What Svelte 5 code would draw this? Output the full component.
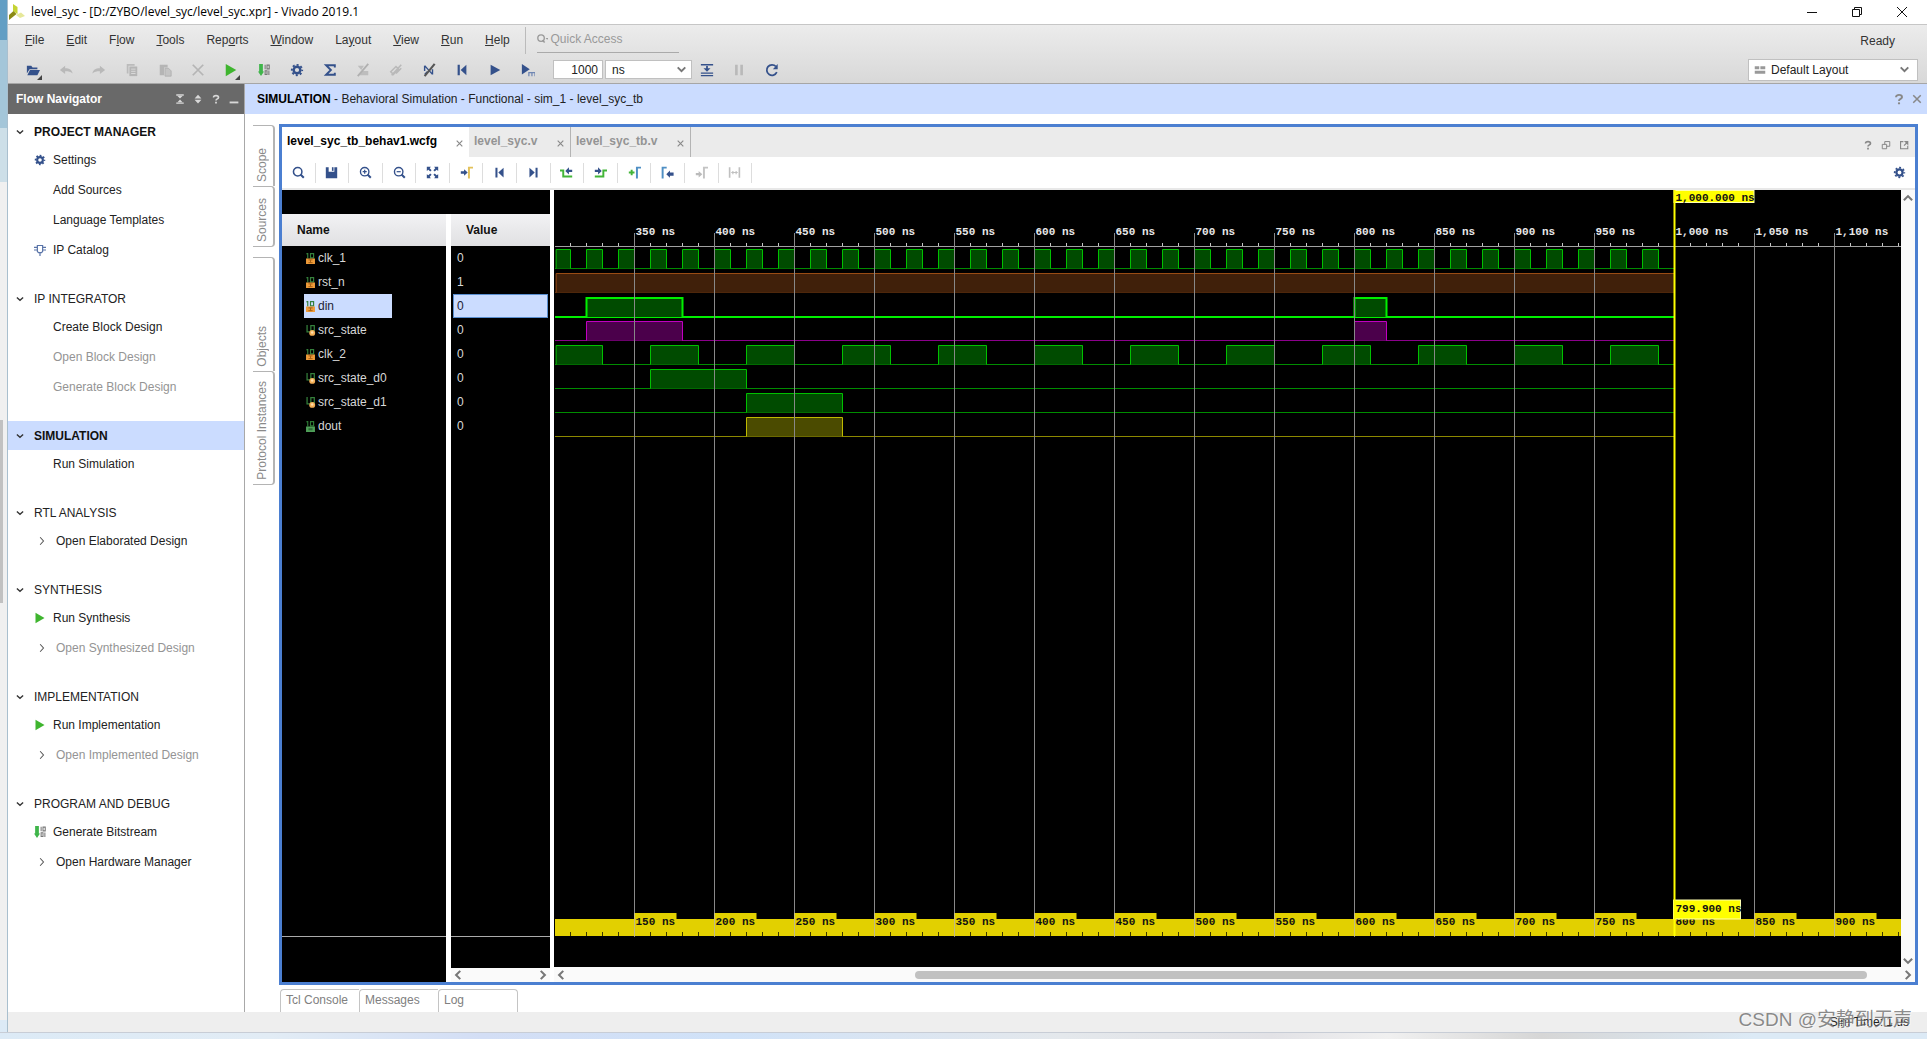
<script>
  const navy = '#34518b';
  const gear = (c) =>
    `<circle cx="8" cy="8" r="3.8" fill="none" stroke="${c}" stroke-width="2.8"/><circle cx="8" cy="8" r="5.9" fill="none" stroke="${c}" stroke-width="2.2" stroke-dasharray="2.32 2.31" stroke-dashoffset="1.16"/>`;
  const bits = `<path d="M1.500 0h5v10h1.500l-4 6-4-6h1.500z" fill="#3fb54a"/><path d="M9.500 1v6M12 1.500h3v5h-3zM9.500 9h2.500v5H9.500zM14.500 8.500v6" fill="none" stroke="#777" stroke-width="1.400"/>`;
  const first = (c) => `<path d="M3 2h2.500v12H3zM13 2v12L6.500 8z" fill="${c}"/>`;

  const icons = {
    open: `<path d="M1 3h5l1.500 2H13v2H4L1 12z" fill="${navy}"/><path d="M4.500 8H16l-3 6H1.500z" fill="${navy}"/>`,
    undo: `<path d="M7 3v3c5 0 8 2 8.500 6C13 10 11 9.500 7 9.500v3L1 8z" fill="#b9b9b9"/>`,
    redo: `<path d="M9 3v3c-5 0-8 2-8.500 6C3 10 5 9.500 9 9.500v3L15 8z" fill="#b9b9b9"/>`,
    copy: `<path d="M2 1h9v2H4v9H2z" fill="#bbb"/><path d="M5 4h9v11H5z" fill="#b5b5b5"/><path d="M7 7h5M7 9.500h5M7 12h5" stroke="#ddd"/>`,
    paste: `<path d="M2 2h9v3H7v9H2z" fill="#b5b5b5"/><path d="M8 6h4l3 3v6H8z" fill="#c4c4c4" stroke="#b0b0b0"/>`,
    cut: `<path d="M2 2l12 12M14 2L2 14" stroke="#b5b5b5" stroke-width="2"/>`,
    run: `<path d="M2 1L14 8 2 15z" fill="#3fb52f"/>`,
    bits,
    gear: gear(navy),
    sigma: `<path d="M13.500 5V2.500H3.500L9 8l-5.500 5.500h10V11" fill="none" stroke="${navy}" stroke-width="2.200"/>`,
    off1: `<path d="M2 3h7L6 8zM7 9h7v5H4z" fill="#bdbdbd"/><path d="M14 1L2 15" stroke="#b0b0b0" stroke-width="2"/>`,
    off2: `<path d="M2 10l6-6 3 3-6 6zM14 2L3 14M8 12l6-6" fill="none" stroke="#b9b9b9" stroke-width="1.800"/>`,
    nobreak: `<path d="M3 3l9 10M3 3v6M12 13V7M3 13l3-3" fill="none" stroke="${navy}" stroke-width="1.600"/><path d="M14.500 1L3 15" stroke="#555" stroke-width="2.400"/>`,
    first: first(navy),
    play: `<path d="M3 2l11 6-11 6z" fill="${navy}"/>`,
    playm: `<path d="M1 1l9 6-9 6z" fill="${navy}"/><path d="M9 15v-4h7v4M12.500 11v4" fill="none" stroke="#6f86b3" stroke-width="1.400"/>`,
    step: `<path d="M1 2h14M1 11.500h14M1 14.500h14" stroke="${navy}" stroke-width="1.500"/><path d="M7 3.500h2V6h3l-4 4-4-4h3z" fill="${navy}"/>`,
    pause: `<path d="M3.500 2h3v12h-3zM9.500 2h3v12h-3z" fill="#b9b9b9"/>`,
    restart: `<path d="M13.500 10.500A6 6 0 1 1 12.500 4" fill="none" stroke="${navy}" stroke-width="2"/><path d="M14.500 1v6H9z" fill="${navy}"/>`,
    search: `<circle cx="7" cy="7" r="5.200" fill="none" stroke="${navy}" stroke-width="1.900"/><path d="M10.500 10.500l4 4" stroke="${navy}" stroke-width="2.500"/>`,
    save: `<path d="M1 1.500h3.500v5.500h7V1.500H15v13.500H1z" fill="${navy}"/><path d="M8.500 1.500h2v4.500h-2z" fill="${navy}"/>`,
    zoomin: `<circle cx="7" cy="7" r="5.200" fill="none" stroke="${navy}" stroke-width="1.700"/><path d="M10.500 10.500l4 4" stroke="${navy}" stroke-width="2.500"/><path d="M4.500 7h5M7 4.500v5" stroke="${navy}" stroke-width="1.500"/>`,
    zoomout: `<circle cx="7" cy="7" r="5.200" fill="none" stroke="${navy}" stroke-width="1.700"/><path d="M10.500 10.500l4 4" stroke="${navy}" stroke-width="2.500"/><path d="M4.500 7h5" stroke="${navy}" stroke-width="1.500"/>`,
    fit: `<path d="M1 1h5L4.600 2.900l2.300 2.300-1.700 1.700-2.300-2.300L1 6zM15 1h-5l1.400 1.900-2.300 2.300 1.700 1.700 2.300-2.300L15 6zM1 15h5l-1.400-1.900 2.300-2.300-1.700-1.700-2.300 2.300L1 10zM15 15h-5l1.400-1.900-2.300-2.300 1.700-1.700 2.300 2.300L15 10z" fill="${navy}"/>`,
    cursor: `<path d="M1 6.500h4V4l4.500 4L5 12V9.500H1z" fill="${navy}"/><path d="M11 15.500V2H16" fill="none" stroke="#e3c15a" stroke-width="2.400"/>`,
    last: `<path d="M10.500 2H13v12h-2.500zM3 2v12l6.500-6z" fill="${navy}"/>`,
    prevedge: `<path d="M0 5.500h4v7.500H15" fill="none" stroke="#43b538" stroke-width="2.400"/><path d="M15 4.500h-4V1.500L6.500 6l4.500 4.500V7.500h4z" fill="${navy}"/>`,
    nextedge: `<path d="M1 13h10.500V5.500H16" fill="none" stroke="#43b538" stroke-width="2.400"/><path d="M1 4.500h4V1.500L9.500 6 5 10.500V7.500H1z" fill="${navy}"/>`,
    addmark: `<path d="M1 8h7M4.500 4.500v7" stroke="#43b538" stroke-width="2.400"/><path d="M11 15.500V2H16" fill="none" stroke="#4f8fc4" stroke-width="2.400"/>`,
    prevmark: `<path d="M2 15.500V2H7" fill="none" stroke="#4f8fc4" stroke-width="2.400"/><path d="M15.500 8H11V5.500L6.500 10l4.500 4.500V12h4.500z" fill="${navy}"/>`,
    nextmark: `<path d="M1 8.500h3.500V6L9 10l-4.500 4v-2.500H1z" fill="#bbb"/><path d="M11 15.500V2H16" fill="none" stroke="#c4c4c4" stroke-width="2.400"/>`,
    span: `<path d="M2 1.500v13M14 1.500v13" stroke="#c0c0c0" stroke-width="2"/><path d="M4 8h8M6 6v4M10 6v4" stroke="#c0c0c0" stroke-width="1.400"/>`,
    chip: `<path d="M4.500 2h7v8l-1.500 1.500H6L4.500 10zM0 4.500h4.500M0 8h4.500M11.500 4.500H16M11.500 8H16M8 11.500V16" fill="none" stroke="#5a74a8" stroke-width="1.600"/>`,
    down: `<path d="M3 5.500l5 4.500 5-4.500" fill="none" stroke="currentColor" stroke-width="2.200"/>`,
    up: `<path d="M2.500 11L8 5.500l5.500 5.500" fill="none" stroke="currentColor" stroke-width="2.800"/>`,
    dn: `<path d="M2.500 5L8 10.500 13.500 5" fill="none" stroke="currentColor" stroke-width="2.800"/>`,
    left: `<path d="M11 2.500L5.500 8l5.500 5.500" fill="none" stroke="currentColor" stroke-width="2.800"/>`,
    right: `<path d="M5 2.500L10.500 8 5 13.500" fill="none" stroke="currentColor" stroke-width="2.800"/>`,
    thin: `<path d="M5.500 3L10 8l-4.500 5" fill="none" stroke="#555" stroke-width="1.400"/>`,
    close: `<path d="M3 3l10 10M13 3L3 13" stroke="currentColor" stroke-width="2"/>`,
    help: `<path d="M4 5.500C4 1.500 12 1.500 12 5.500 12 8 8 7.500 8 10.500" fill="none" stroke="currentColor" stroke-width="2.600"/><path d="M6.600 12.500h2.800v2.500H6.600z" fill="currentColor"/>`,
    collapse: `<path d="M2 1.500h12M2 14.500h12" stroke="currentColor" stroke-width="2.200"/><path d="M4 3h8L8 7.300zM4 13h8L8 8.700z" fill="currentColor"/>`,
    expand: `<path d="M2.500 7h11L8 1zM2.500 9h11L8 15z" fill="currentColor"/>`,
    minus: `<path d="M1 13.500h14" stroke="currentColor" stroke-width="3"/>`,
    restore: `<path d="M2 7h7v7H2zM6 7V2.500h8v7.500H9" fill="none" stroke="currentColor" stroke-width="1.600"/>`,
    popout: `<path d="M7 2.500H2.500V14H14V9M10 2.500h4v4zM8 9l5-5" fill="none" stroke="currentColor" stroke-width="1.800"/>`,
    layout: `<path d="M1 3h6v4H1zM8.500 3H15v4H8.500zM1 9h14v4H1z" fill="#999"/>`,
    in: `<path d="M4 0v8M2 1.500l2-1M8 1h4.500v6H8z" fill="none" stroke="#35803c" stroke-width="1.700"/><path d="M1.500 8h13v8h-13z" fill="#ee9b3a"/><path d="M5 10h6M5 14h6M8 10v4" stroke="#a05a10" stroke-width="1.300"/>`,
    reg: `<path d="M3 0v10h4M8.500 1h5v7h-5z" fill="none" stroke="#35803c" stroke-width="1.800"/><circle cx="10.500" cy="11.500" r="4.300" fill="#f3ae55"/><circle cx="10.500" cy="11" r="1.800" fill="#ffe0b0"/>`,
    out: `<path d="M4 0v8M2 1.500l2-1M8 1h4.500v6H8z" fill="none" stroke="#2d7a35" stroke-width="1.700"/><path d="M1.500 8h13v8h-13z" fill="#4f9f58"/><path d="M5 10.500h6v3H5z" fill="#2d6b35"/>`
  };

  const menu = [['', 'F', 'ile'], ['', 'E', 'dit'], ['F', 'l', 'ow'], ['', 'T', 'ools'], ['Rep', 'o', 'rts'], ['', 'W', 'indow'], ['La', 'y', 'out'], ['', 'V', 'iew'], ['', 'R', 'un'], ['', 'H', 'elp']];
  const tools = [['open', 'Open', 1], ['undo', 'Undo'], ['redo', 'Redo'], ['copy', 'Copy'], ['paste', 'Paste'], ['cut', 'Delete'], ['run', 'Run', 1], ['bits', 'Generate Bitstream'], ['gear', 'Settings'], ['sigma', 'Report'], ['off1', 'Breakpoint'], ['off2', 'Clear'], ['nobreak', 'Disable'], ['first', 'Restart'], ['play', 'Run All'], ['playm', 'Run For']];
  const waveTools = ['search', 'save', 'zoomin', 'zoomout', 'fit', 'cursor', 'first', 'last', 'prevedge', 'nextedge', 'addmark', 'prevmark', 'nextmark', 'span'];

  const nav = [
    { title: 'PROJECT MANAGER', bold: true, items: [['gear', 'Settings'], ['', 'Add Sources'], ['', 'Language Templates'], ['chip', 'IP Catalog']] },
    { title: 'IP INTEGRATOR', items: [['', 'Create Block Design'], ['', 'Open Block Design', 1], ['', 'Generate Block Design', 1]] },
    { title: 'SIMULATION', bold: true, active: true, items: [['', 'Run Simulation']] },
    { title: 'RTL ANALYSIS', items: [['thin', 'Open Elaborated Design']] },
    { title: 'SYNTHESIS', items: [['run', 'Run Synthesis'], ['thin', 'Open Synthesized Design', 1]] },
    { title: 'IMPLEMENTATION', items: [['run', 'Run Implementation'], ['thin', 'Open Implemented Design', 1]] },
    { title: 'PROGRAM AND DEBUG', items: [['bits', 'Generate Bitstream'], ['thin', 'Open Hardware Manager']] }
  ];

  const pulses = (from, high, period) => {
    const out = [];
    for (let t = from; t < 1000; t += period) out.push([Math.max(t, 301), t + high]);
    return out;
  };
  const green = { line: '#00c000', low: '#008c00', fill: '#004b00' };
  const signals = [
    { name: 'clk_1', value: 0, icon: 'in', ...green, high: pulses(300, 10, 20) },
    { name: 'rst_n', value: 1, icon: 'in', line: '#9a4c14', low: '#5c2e0c', fill: '#40200a', high: [[301, 1000]] },
    { name: 'din', value: 0, icon: 'in', selected: true, line: '#00f000', low: '#00f000', fill: '#004b00', high: [[320, 380], [800, 820]] },
    { name: 'src_state', value: 0, icon: 'reg', line: '#c000c0', low: '#8c008c', fill: '#4b004b', high: [[320, 380], [800, 820]] },
    { name: 'clk_2', value: 0, icon: 'in', ...green, high: pulses(300, 30, 60) },
    { name: 'src_state_d0', value: 0, icon: 'reg', ...green, high: [[360, 420]] },
    { name: 'src_state_d1', value: 0, icon: 'reg', ...green, high: [[420, 480]] },
    { name: 'dout', value: 0, icon: 'out', line: '#beba00', low: '#8c8800', fill: '#4b4b00', high: [[420, 480]] }
  ];

  const x = (t) => 80.5 + (t - 350) * 1.6;
  const range = (a, b, s) => Array.from({ length: Math.floor((b - a) / s) + 1 }, (_, i) => a + i * s);
  const majors = range(350, 1100, 50);
  const minors = range(310, 1140, 10);
  const label = (t) => t.toLocaleString('en-US') + ' ns';
</script>

{#snippet icon(name, size = 14)}
  <svg class="icon" width={size} height={size} viewBox="0 0 16 16" aria-hidden="true">{@html icons[name]}</svg>
{/snippet}

<div class="desktop">
  <div class="backdrop"></div>
  <div class="window">
    <header class="titlebar">
      <svg width="16" height="16" viewBox="0 0 16 16" aria-hidden="true">
        <path d="M4 0l4.500 3v7L4 7z" fill="#c5d334" /><path d="M4.500 7l3 3-7.500 6v-5z" fill="#8b8a14" /><path d="M7 11l5-2.500 4 3.500-5 2z" fill="#e6e89a" />
      </svg>
      <span>level_syc - [D:/ZYBO/level_syc/level_syc.xpr] - Vivado 2019.1</span>
      <div class="winbtns">
        <button aria-label="Minimize"><svg width="12" height="12" viewBox="0 0 12 12"><path d="M1 6.500h10" stroke="#111" /></svg></button>
        <button aria-label="Restore"><svg width="12" height="12" viewBox="0 0 12 12"><path d="M1.500 3.500h7v7h-7zM3.500 3V1.500h7v7H9" fill="none" stroke="#111" /></svg></button>
        <button aria-label="Close"><svg width="12" height="12" viewBox="0 0 12 12"><path d="M1 1l10 10M11 1L1 11" stroke="#111" /></svg></button>
      </div>
    </header>

    <div class="chrome">
      <div class="menubar">
        <nav class="menu">
          {#each menu as [a, b, c]}<button>{a}<u>{b}</u>{c}</button>{/each}
        </nav>
        <label class="quick">
          <svg width="13" height="12" viewBox="0 0 13 12" aria-hidden="true"><circle cx="4.500" cy="5" r="3.600" fill="none" stroke="#999" stroke-width="1.500" /><path d="M6 7.500l2.500 2.500" stroke="#999" stroke-width="1.600" /><path d="M9.500 5h3.500l-1.700 1.700z" fill="#999" /></svg>
          <input type="text" placeholder="Quick Access" aria-label="Quick Access" />
        </label>
        <span class="ready">Ready</span>
      </div>
      <div class="toolbar">
        {#each tools as [name, title, more]}
          <button class="tool" aria-label={title}>
            {@render icon(name, name === 'bits' ? 12 : 14)}
            {#if more}<svg class="corner" width="5" height="5" viewBox="0 0 5 5"><path d="M5 0v5H0z" fill="#444" /></svg>{/if}
          </button>
        {/each}
        <input class="amount" type="text" value="1000" aria-label="Run time" />
        <div class="pick unit">
          <select aria-label="Time unit"><option>ns</option></select>
          {@render icon('dn', 11)}
        </div>
        <button class="tool step" aria-label="Step">{@render icon('step')}</button>
        <button class="tool" aria-label="Break">{@render icon('pause')}</button>
        <button class="tool" aria-label="Relaunch">{@render icon('restart')}</button>
        <div class="pick layout">
          {@render icon('layout', 12)}
          <select aria-label="Layout"><option>Default Layout</option></select>
          {@render icon('dn', 11)}
        </div>
      </div>
    </div>

    <div class="body">
      <aside class="flow">
        <div class="flowhead">
          <strong>Flow Navigator</strong>
          {#each ['collapse', 'expand', 'help', 'minus'] as n}<button aria-label={n}>{@render icon(n, 10)}</button>{/each}
        </div>
        <div class="sections">
          {#each nav as s}
            <section>
              <h2 class:active={s.active} class:bold={s.bold}><span class="twist">{@render icon('down', 10)}</span>{s.title}</h2>
              {#each s.items as [ic, text, off]}
                <button class="item" class:off class:nested={ic === 'thin'}>
                  <span class="lead">{#if ic}{@render icon(ic, 12)}{/if}</span>{text}
                </button>
              {/each}
            </section>
          {/each}
        </div>
      </aside>

      <main>
        <div class="simhead">
          <p><strong>SIMULATION</strong> - Behavioral Simulation - Functional - sim_1 - level_syc_tb</p>
          <button aria-label="Help">{@render icon('help', 12)}</button>
          <button aria-label="Close">{@render icon('close', 12)}</button>
        </div>
        <div class="work">
          <div class="side">
            <div class="group">
              <button class="short"><span>Scope</span></button>
              <button class="short"><span>Sources</span></button>
            </div>
            <div class="group">
              <button class="tall"><span>Objects</span></button>
              <button class="tall"><span>Protocol Instances</span></button>
            </div>
          </div>
          <div class="center">
            <div class="frame">
              <div class="tabs">
                <button class="tab on">level_syc_tb_behav1.wcfg {@render icon('close', 9)}</button>
                <button class="tab two">level_syc.v {@render icon('close', 9)}</button>
                <button class="tab three">level_syc_tb.v {@render icon('close', 9)}</button>
                <div class="tabtools">
                  {#each ['help', 'restore', 'popout'] as n}<button aria-label={n}>{@render icon(n, 10)}</button>{/each}
                </div>
              </div>
              <div class="wavebar">
                <div class="wavetools">
                  {#each waveTools as n}<button aria-label={n}>{@render icon(n, 13)}</button>{/each}
                </div>
                <button class="cfg" aria-label="Settings">{@render icon('gear', 13)}</button>
              </div>
              <div class="wave">
                <div class="lists">
                  <div class="strip"></div>
                  <div class="cols">
                    <div class="col names">
                      <table>
                        <thead><tr><th>Name</th></tr></thead>
                        <tbody>
                          {#each signals as s}
                            <tr><td><span class="sig" class:sel={s.selected}>{@render icon(s.icon, 11)}{s.name}</span></td></tr>
                          {/each}
                        </tbody>
                      </table>
                      <div class="foot tallfoot"></div>
                    </div>
                    <div class="col values">
                      <table>
                        <thead><tr><th>Value</th></tr></thead>
                        <tbody>
                          {#each signals as s}
                            <tr><td><span class="val" class:sel={s.selected}>{s.value}</span></td></tr>
                          {/each}
                        </tbody>
                      </table>
                      <div class="foot"></div>
                      <div class="hbar"><button aria-label="Scroll left">{@render icon('left', 12)}</button><button aria-label="Scroll right">{@render icon('right', 12)}</button></div>
                    </div>
                  </div>
                </div>

                <div class="plot">
                  <svg class="canvas" role="img" aria-label="Waveforms">
                    <path d="M1 56.500H1347" stroke="#a0a0a0" />
                    {#each minors as t}<path d={`M${x(t)} 53V56`} stroke="#c8c8c8" />{/each}
                    {#each signals as s, i}
                      {@const w = s.selected ? 2 : 1}
                      {@const top = (s.selected ? 60 : 59.5) + i * 24}
                      <path d={`M1 ${top + 19}H${x(1000)}`} stroke={s.low} stroke-width={w} />
                      {#each s.high as [a, b]}
                        <rect x={x(a)} y={top} width={x(b) - x(a)} height="19" fill={s.fill} />
                        <path d={`M${x(a)} ${top + 19}V${top}H${x(b)}V${top + 19}`} fill="none" stroke={s.line} stroke-width={w} />
                      {/each}
                    {/each}
                    <svg y="100%" class="over">
                      <rect x="1" y="-48" width="1346" height="17" fill="#e2d000" />
                      {#each minors as t}<path d={`M${x(t)} -35V-31`} stroke="#3a3600" />{/each}
                      {#each majors as t}
                        <rect x={x(t)} y="-54" width="42" height="7" fill="#e2d000" />
                      {/each}
                    </svg>
                    {#each majors as t}
                      <svg x={x(t)} y="43" height="100%" class="over"><line x1="0" x2="0" y1="0" y2="100%" stroke="#888" /></svg>
                      <text x={x(t) + 1} y="45" fill="#e8e8e8">{label(t)}</text>
                    {/each}
                    <svg y="100%" class="over">
                      <rect x="0" y="-30" width="1347" height="80" fill="#000" />
                      {#each majors as t}
                        <path d={`M${x(t)} -54V-31`} stroke="#c4bc80" />
                        <text x={x(t) + 1} y="-42" fill="#111">{label(t - 200)}</text>
                      {/each}
                      <rect x={x(1000) - 1} y="-67" width="67" height="19" fill="#ff0" stroke="#ffffb0" />
                      <text x={x(1000) + 1} y="-55" fill="#111">799.900 ns</text>
                    </svg>
                    <rect x={x(1000) - 0.5} y="0.500" width="80" height="12" fill="#ff0" stroke="#ffffb0" />
                    <text x={x(1000) + 1} y="11" fill="#111">1,000.000 ns</text>
                    <svg x={x(1000)} y="-31" height="100%" class="over"><line x1="0" x2="0" y1="31" y2="100%" stroke="#ff0" stroke-width="2" /></svg>
                  </svg>
                  <div class="vbar"><button aria-label="Scroll up">{@render icon('up', 12)}</button><button aria-label="Scroll down">{@render icon('dn', 12)}</button></div>
                  <div class="hbar wide"><button aria-label="Scroll left">{@render icon('left', 12)}</button><span class="track"><span class="thumb"></span></span><button aria-label="Scroll right">{@render icon('right', 12)}</button></div>
                </div>
              </div>
            </div>
            <div class="consoles">
              <button>Tcl Console</button><button>Messages</button><button>Log</button>
            </div>
          </div>
        </div>
      </main>
    </div>
    <footer><span>Sim Time: 1 us</span></footer>
  </div>
  <div class="taskline"></div>
  <div class="mark">CSDN @安静到无声</div>
</div>

<style>
  :global(body) { margin: 0; }
  .desktop {
    position: relative;
    display: grid;
    grid-template: 1fr 7px / 8px 1fr;
    height: 100vh;
    overflow: hidden;
    font: 12px/16px "Liberation Sans", Arial, sans-serif;
    color: #222;
  }
  .desktop * { box-sizing: border-box; }
  button { font: inherit; color: inherit; background: none; border: 0; padding: 0; margin: 0; text-align: left; white-space: nowrap; }
  .icon { display: block; flex: none; }
  .backdrop {
    border-right: 1px solid #a9bfce;
    background:
      linear-gradient(#c1c1c1, #c1c1c1) 0 420px / 3px 183px no-repeat,
      linear-gradient(#629ec4 40px, #a4c6d9 40px 128px, #cddfe8 128px 182px, #f0f0f0 182px 1020px, #dceaf6 1020px);
  }
  .taskline {
    grid-column: 1 / -1;
    border-top: 1px solid #c8cdd6;
    background: linear-gradient(90deg, #dceaf6, #e2ecf5 14%, #d3def5 25%, #d0e2f8 38%, #e4e8ec 55%, #e2e2e6 66%, #f0f0f0 72%, #d6d6d6 80%, #dceaf6 91%);
  }
  .window { display: flex; flex-direction: column; min-width: 0; min-height: 0; background: #fff; }

  .titlebar { display: flex; align-items: center; gap: 6px; height: 24px; padding: 0 19px 0 1px; font-family: "Open Sans", "Noto Sans", sans-serif; color: #000; }
  .winbtns { display: flex; gap: 33px; margin-left: auto; }
  .winbtns svg { display: block; }

  .chrome { height: 60px; border-top: 1px solid #c6c6c6; border-bottom: 1px solid #a6a6a6; background: linear-gradient(#ececec, #d8d8d8); }
  .menubar { display: flex; align-items: center; height: 31px; padding-left: 17px; color: #333; }
  .menu { display: flex; gap: 22px; padding-right: 15px; border-right: 1px solid #bbb; line-height: 27px; }
  .quick { display: flex; align-items: center; gap: 2px; width: 142px; height: 25px; margin-left: 11px; border-bottom: 1px solid #aaa; padding-bottom: 2px; }
  .quick input { width: 100%; border: 0; padding: 0; background: none; font: inherit; outline: 0; }
  .quick input::placeholder { color: #999; opacity: 1; }
  .ready { margin-left: auto; margin-right: 32px; }
  .toolbar { display: flex; align-items: center; height: 27px; padding: 0 9px 0 8px; }
  .tool { position: relative; display: flex; align-items: center; justify-content: center; width: 33px; height: 26px; }
  .step { width: 30px; }
  .corner { position: absolute; right: 7px; bottom: 3px; }
  .amount { width: 50px; height: 19px; margin-left: 9px; border: 1px solid #c0c0c0; background: #fff; padding: 0 4px; font: inherit; color: #222; text-align: right; }
  .pick { display: flex; align-items: center; border: 1px solid #c0c0c0; background: #fff; color: #777; }
  .pick select { flex: 1; min-width: 0; appearance: none; border: 0; background: none; padding: 0; font: inherit; color: #222; }
  .unit { width: 87px; height: 19px; margin-left: 2px; padding: 0 4px 0 6px; }
  .layout { width: 170px; height: 22px; margin-left: auto; padding: 0 7px 0 5px; gap: 5px; }

  .body { display: flex; flex: 1; min-height: 0; }
  .flow { width: 237px; flex: none; border-right: 1px solid #a8a8a8; }
  .flowhead { display: flex; align-items: center; gap: 8px; height: 30px; padding: 0 5px 0 8px; background: #696969; color: #fff; }
  .flowhead strong { flex: 1; }
  .flowhead button { color: #d8d8d8; }
  .sections { display: flex; flex-direction: column; gap: 18px; padding-top: 3px; }
  h2 { display: flex; align-items: center; height: 29px; margin: 0; font-size: 12px; font-weight: 400; color: #222; }
  h2.bold { font-weight: 700; color: #111; }
  h2.active { background: #cbdcff; }
  .twist { width: 26px; padding-left: 7px; color: #333; }
  .item { display: flex; align-items: center; width: 100%; height: 30px; padding: 0 0 2px 26px; }
  .lead { width: 19px; }
  .nested .lead { width: 22px; padding-left: 2px; }
  .item.off { color: #949494; }

  main { display: flex; flex-direction: column; flex: 1; min-width: 0; }
  .simhead { display: flex; align-items: center; gap: 6px; height: 30px; padding: 0 4px 0 12px; background: #cbdcff; }
  .simhead p { flex: 1; margin: 0; }
  .simhead strong { color: #000; }
  .simhead button { color: #888; }
  .work { display: flex; flex: 1; min-height: 0; padding: 10px 9px 0 8px; }
  .side { display: flex; flex-direction: column; gap: 10px; width: 22px; margin: 1px 4px 0 0; }
  .group { display: flex; flex-direction: column; }
  .side button { display: flex; align-items: flex-end; justify-content: center; width: 22px; padding: 0 2px 4px 0; border: solid #b4b4b4; border-width: 1px 2px 0 0; border-radius: 0 4px 0 0; color: #8a8a8a; }
  .side button:last-child { border-bottom-width: 1px; border-radius: 0 4px 4px 0; }
  .side span { writing-mode: vertical-rl; transform: rotate(180deg); }
  .short { height: 61px; }
  .tall { height: 114px; }

  .center { display: flex; flex-direction: column; flex: 1; min-width: 0; }
  .frame { display: flex; flex-direction: column; flex: 1; min-height: 0; border: 3px solid #4b7fd1; }
  .tabs { display: flex; height: 30px; background: #ebebeb; }
  .tab { display: flex; align-items: center; justify-content: space-between; padding: 0 5px 2px 5px; font-weight: 700; color: #949494; }
  .tab.on { width: 187px; background: #fff; color: #000; }
  .tab .icon { margin-top: 4px; color: #888; }
  .two { width: 102px; border-right: 1px solid #b4b4b4; }
  .three { width: 120px; border-right: 1px solid #b4b4b4; }
  .tabtools { display: flex; align-items: center; gap: 8px; margin-left: auto; padding: 6px 6px 0 0; color: #888; }
  .wavebar { display: flex; align-items: center; justify-content: space-between; height: 33px; padding: 0 9px 0 0; border-bottom: 2px solid #e8e8e8; }
  .wavetools { display: flex; width: 470px; }
  .wavetools button { display: flex; align-items: center; justify-content: center; flex: 1; height: 20px; border-right: 1px solid #ddd; }

  .wave { display: flex; flex: 1; min-height: 0; }
  .lists { display: flex; flex-direction: column; width: 268px; }
  .strip { height: 24px; background: #000; }
  .cols { display: flex; flex: 1; gap: 5px; }
  .col { display: flex; flex-direction: column; background: #000; color: #d8d8d8; }
  .names { width: 164px; }
  .values { flex: 1; }
  table { width: 100%; border-collapse: collapse; }
  th { height: 32px; padding: 0 15px; background: linear-gradient(#f2f2f4, #e0e0e2); color: #111; text-align: left; }
  td { height: 24px; padding: 0; }
  .names td { padding-left: 22px; }
  .sig { display: flex; align-items: center; gap: 2px; width: 88px; height: 24px; padding-left: 1px; }
  .values td { padding: 0 2px; }
  .val { display: flex; align-items: center; height: 24px; padding-left: 3px; border: 1px solid transparent; }
  .sel { background: #cbdcff; color: #223; }
  .val.sel { border-color: #5a8fd0; }
  .foot { margin-top: auto; height: 32px; border-top: 1px solid #aaa; }
  .tallfoot { height: 46px; }
  .hbar { display: flex; align-items: center; justify-content: space-between; height: 14px; padding: 0 1px; background: #fafafa; color: #777; }

  .plot { display: grid; grid-template: minmax(0, 1fr) 15px / minmax(0, 1fr) 14px; flex: 1; min-width: 0; margin-left: 4px; }
  .canvas { display: block; width: 100%; height: 100%; overflow: hidden; background: #000; }
  .over { overflow: visible; }
  text { font: 700 11px "Liberation Mono", monospace; }
  .vbar { display: flex; flex-direction: column; align-items: center; justify-content: space-between; padding: 2px 0 0; background: #fafafa; color: #777; }
  .wide { grid-column: 1 / -1; height: 15px; }
  .track { flex: 1; height: 8px; padding: 0 35px 0 348px; }
  .thumb { display: block; height: 8px; border-radius: 4px; background: #c1c1c1; }

  .consoles { display: flex; height: 27px; margin-left: 1px; padding-top: 4px; }
  .consoles button { width: 79px; padding: 0 5px 2px; border: solid #c4c4c4; border-width: 1px 0 0 1px; border-radius: 4px 0 0 0; color: #808080; }
  .consoles button:last-child { width: 80px; border-right-width: 1px; border-radius: 4px 4px 0 0; }
  footer { display: flex; align-items: center; justify-content: flex-end; height: 20px; padding-right: 18px; background: #eee; color: #222; }
  .mark { position: absolute; right: 15px; bottom: 7px; font: 19px/24px "Liberation Sans", "Noto Sans CJK SC", sans-serif; color: rgba(90, 90, 90, 0.7); text-shadow: 1px 1px 0 rgba(255, 255, 255, 0.5); }
</style>
